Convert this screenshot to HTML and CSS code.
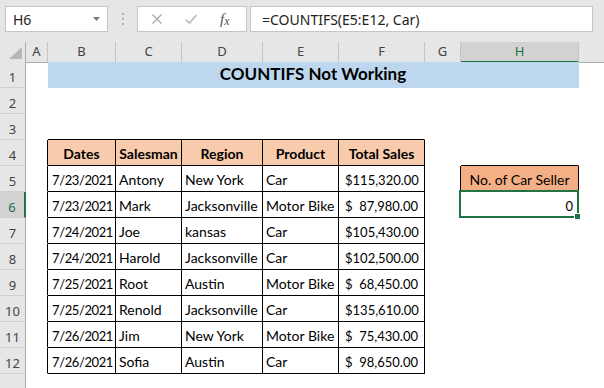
FILE: index.html
```html
<!DOCTYPE html>
<html lang="en">
<head>
    <meta charset="UTF-8" />
    <title>COUNTIFS Not Working</title>
    <link rel="stylesheet" href="styles.css">
</head>
<body>

    <!-- Formula bar -->
    <div class="toolbar">
        <div class="namebox">
            <span>H6</span>
            <svg width="7" height="4" viewBox="0 0 7 4"><path d="M0 0H7L3.5 4Z" fill="#7a7a7a"/></svg>
        </div>
        <div class="grip"><i></i><i></i><i></i></div>
        <div class="fnbox">
            <svg class="ic-x" width="12" height="12" viewBox="0 0 12 12"><path d="M1.5 1.5L10.5 10.5M10.5 1.5L1.5 10.5" stroke="#a9a9a9" stroke-width="1.3" fill="none"/></svg>
            <svg class="ic-ok" width="14" height="12" viewBox="0 0 14 12"><path d="M1.5 6.5L5.5 10L12.5 2" stroke="#b9b9b9" stroke-width="1.6" fill="none"/></svg>
            <span class="fx">f<span>x</span></span>
        </div>
        <div class="formula">=COUNTIFS(E5:E12, Car)</div>
    </div>

    <!-- Sheet -->
    <div class="sheet">
        <div class="row colhead">
            <div class="corner"><svg width="13" height="12" viewBox="0 0 13 12"><path d="M13 0V12H0Z" fill="#b6b6b6"/></svg></div>
            <div>A</div><div>B</div><div>C</div><div>D</div><div>E</div><div>F</div><div>G</div>
            <div class="sel-col">H</div>
            <div class="rest"></div>
        </div>

        <div class="row">
            <div class="rh">1</div><div class="c"></div>
            <div class="c title">COUNTIFS Not Working</div>
            <div class="c"></div>
        </div>
        <div class="row">
            <div class="rh">2</div>
        </div>
        <div class="row">
            <div class="rh">3</div><div class="c"></div>
            <div class="c top-edge"></div>
        </div>
        <div class="row">
            <div class="rh">4</div><div class="c edge"></div>
            <div class="c t th">Dates</div>
            <div class="c t th">Salesman</div>
            <div class="c t th">Region</div>
            <div class="c t th">Product</div>
            <div class="c t th">Total Sales</div>
            <div class="c"></div>
            <div class="c box-top"></div>
        </div>
        <div class="row">
            <div class="rh">5</div><div class="c edge"></div>
            <div class="c t date">7/23/2021</div>
            <div class="c t">Antony</div>
            <div class="c t">New York</div>
            <div class="c t">Car</div>
            <div class="c t money"><span>$</span><span>115,320.00</span></div>
            <div class="c edge"></div>
            <div class="c t result-head">No. of Car Seller</div>
        </div>
        <div class="row">
            <div class="rh active">6</div><div class="c edge"></div>
            <div class="c t date">7/23/2021</div>
            <div class="c t">Mark</div>
            <div class="c t">Jacksonville</div>
            <div class="c t">Motor Bike</div>
            <div class="c t money"><span>$</span><span>87,980.00</span></div>
            <div class="c"></div>
            <div class="c result">0<span class="sel"><span class="handle"></span></span></div>
        </div>
        <div class="row">
            <div class="rh">7</div><div class="c edge"></div>
            <div class="c t date">7/24/2021</div>
            <div class="c t">Joe</div>
            <div class="c t">kansas</div>
            <div class="c t">Car</div>
            <div class="c t money"><span>$</span><span>105,430.00</span></div>
        </div>
        <div class="row">
            <div class="rh">8</div><div class="c edge"></div>
            <div class="c t date">7/24/2021</div>
            <div class="c t">Harold</div>
            <div class="c t">Jacksonville</div>
            <div class="c t">Car</div>
            <div class="c t money"><span>$</span><span>102,500.00</span></div>
        </div>
        <div class="row">
            <div class="rh">9</div><div class="c edge"></div>
            <div class="c t date">7/25/2021</div>
            <div class="c t">Root</div>
            <div class="c t">Austin</div>
            <div class="c t">Motor Bike</div>
            <div class="c t money"><span>$</span><span>68,450.00</span></div>
        </div>
        <div class="row">
            <div class="rh">10</div><div class="c edge"></div>
            <div class="c t date">7/25/2021</div>
            <div class="c t">Renold</div>
            <div class="c t">Jacksonville</div>
            <div class="c t">Car</div>
            <div class="c t money"><span>$</span><span>135,610.00</span></div>
        </div>
        <div class="row">
            <div class="rh">11</div><div class="c edge"></div>
            <div class="c t date">7/26/2021</div>
            <div class="c t">Jim</div>
            <div class="c t">New York</div>
            <div class="c t">Motor Bike</div>
            <div class="c t money"><span>$</span><span>75,430.00</span></div>
        </div>
        <div class="row">
            <div class="rh">12</div><div class="c edge"></div>
            <div class="c t date">7/26/2021</div>
            <div class="c t">Sofia</div>
            <div class="c t">Austin</div>
            <div class="c t">Car</div>
            <div class="c t money"><span>$</span><span>98,650.00</span></div>
        </div>
        <div class="row">
            <div class="rh"></div>
        </div>
    </div>

</body>
</html>
```

FILE: styles.css
```css
body {
    margin: 0;
    width: 604px;
    height: 388px;
    overflow: hidden;
    background: #fff;
    font-family: 'Lato', sans-serif;
    color: #000;
}

/* formula bar */

.toolbar {
    display: flex;
    align-items: flex-start;
    height: 42px;
    padding: 6px 0 0 5px;
    box-sizing: border-box;
    background: #e6e6e6;
}

.namebox, .fnbox, .formula {
    height: 26px;
    box-sizing: border-box;
    border: 1px solid #c6c6c6;
    background: #fff;
}

.namebox {
    width: 103px;
    display: flex;
    align-items: center;
    justify-content: space-between;
    padding: 0 7px;
    font: 14px 'Noto Sans', sans-serif;
    color: #222;
}

.grip {
    width: 29px;
    display: flex;
    flex-direction: column;
    align-items: center;
    gap: 3px;
    padding-top: 7px;
}

.grip i {
    width: 2px;
    height: 2px;
    background: #b0b0b0;
}

.fnbox {
    width: 110px;
    display: flex;
    align-items: center;
}

.ic-x {
    margin-left: 13px;
}

.ic-ok {
    margin-left: 21px;
}

.fx {
    margin-left: 22px;
    font: italic 15px 'Liberation Serif', serif;
    color: #555;
}

.fx span {
    font-size: 12px;
    position: relative;
    top: 1px;
}

.formula {
    width: 343px;
    margin-left: 3px;
    padding-left: 11px;
    font: 14px 'Noto Sans', sans-serif;
    line-height: 25px;
    color: #222;
}

/* sheet grid */

.row {
    display: grid;
    grid-template-columns: 26px 22px 68px 66px 81px 76px 86px 36px 118px 1fr;
    height: 26px;
}

.row > div {
    box-sizing: border-box;
}

.colhead {
    height: 20px;
    background: #e6e6e6;
}

.colhead > div {
    border-right: 1px solid #c4c4c4;
    border-bottom: 1px solid #ababab;
    text-align: center;
    font: 13px 'Noto Sans', sans-serif;
    line-height: 19px;
    color: #444;
}

.colhead .corner {
    display: flex;
    align-items: flex-end;
    justify-content: flex-end;
    padding: 0 3px 3px 0;
    border-right-color: #ababab;
}

.colhead .sel-col {
    background: #d2d2d2;
    border-bottom: 2px solid #217346;
    color: #217346;
}

.colhead .rest {
    border-right: none;
}

.rh {
    background: #e6e6e6;
    border-right: 1px solid #ababab;
    border-bottom: 1px solid #d0d0d0;
    text-align: center;
    font: 13px 'Noto Sans', sans-serif;
    line-height: 19px;
    padding-top: 6px;
    color: #444;
}

.rh.active {
    background: #d2d2d2;
    border-right: 2px solid #217346;
    color: #217346;
}

.c {
    display: flex;
    align-items: flex-end;
    padding: 0 3px 3px;
    border-right: 1px solid transparent;
    border-bottom: 1px solid transparent;
    font-size: 14px;
    line-height: 16px;
    white-space: nowrap;
}

.title {
    grid-column: span 7;
    justify-content: center;
    background: #bdd7ee;
    font-size: 17px;
    font-weight: bold;
    line-height: 20px;
}

.top-edge {
    grid-column: span 5;
    border-bottom-color: #000;
}

.edge {
    border-right-color: #000;
}

.box-top {
    border-bottom-color: #000;
}

.t {
    border-right-color: #000;
    border-bottom-color: #000;
}

.th {
    justify-content: center;
    background: #f8cbad;
    font-weight: bold;
}

.date {
    justify-content: flex-end;
    padding-right: 2px;
    font-size: 13px;
    letter-spacing: -0.4px;
}

.money {
    justify-content: space-between;
    padding: 0 6px 3px;
    font-size: 13px;
}

.result-head {
    justify-content: center;
    background: #f4b084;
}

.result {
    position: relative;
    justify-content: flex-end;
    padding-right: 5px;
    font-size: 13px;
}

.sel {
    position: absolute;
    left: -2px;
    top: -2px;
    right: -1px;
    bottom: -1px;
    border: 2px solid #217346;
}

.handle {
    position: absolute;
    right: -4px;
    bottom: -4px;
    width: 5px;
    height: 5px;
    background: #217346;
    border: 1px solid #fff;
}
```
